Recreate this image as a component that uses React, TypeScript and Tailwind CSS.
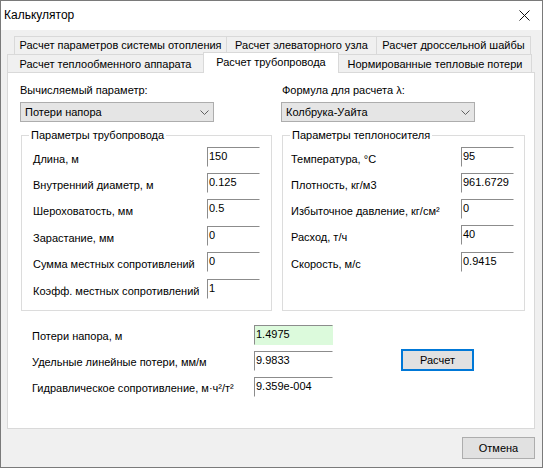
import React from "react";

const font = "font-['Liberation_Sans','Noto_Sans',sans-serif]";

function Field({ value, green }: { value: string; green?: boolean }) {
  return (
    <div
      className={
        green
          ? "h-[20px] w-[79px] shrink-0 border border-t-[#8c8c8c] border-l-[#8c8c8c] border-r-transparent border-b-transparent bg-[#dcfadc] pl-[1px] pt-[1px] leading-[14px] whitespace-nowrap"
          : "h-[20px] w-[79px] shrink-0 border border-t-[#8c8c8c] border-l-[#8c8c8c] border-r-transparent border-b-transparent bg-white pl-[1px] pt-[1px] leading-[14px] whitespace-nowrap"
      }
    >
      {value}
    </div>
  );
}

function SmallField({ value }: { value: string }) {
  return (
    <div className="h-[20px] w-[53px] shrink-0 border border-t-[#8c8c8c] border-l-[#8c8c8c] border-r-transparent border-b-transparent bg-white pl-[1px] pt-[1px] leading-[14px] whitespace-nowrap overflow-hidden">
      {value}
    </div>
  );
}

function Combo({ text }: { text: string }) {
  return (
    <div className="h-[20px] w-[194px] border border-[#adadad] bg-[#e5e5e5] flex items-center justify-between pl-[4px] pr-[3px]">
      <span className="leading-[14px]">{text}</span>
      <svg width="9" height="5" viewBox="0 0 9 5" className="mr-[1px]">
        <polyline points="0.5,0.5 4.5,4.5 8.5,0.5" fill="none" stroke="#606060" strokeWidth="1" />
      </svg>
    </div>
  );
}

function Row({ label, value, mt, labelW }: { label: string; value: string; mt: string; labelW: string }) {
  return (
    <div className={"flex items-start h-[20px] " + mt}>
      <div className={"shrink-0 leading-[15px] mt-[5px] whitespace-nowrap " + labelW}>{label}</div>
      <SmallField value={value} />
    </div>
  );
}

export default function App() {
  return (
    <div className={"w-[543px] h-[468px] flex flex-col border border-[#7a7a7a] bg-[#f0f0f0] text-[11px] text-black " + font}>
      {/* Title bar */}
      <div className="h-[29px] shrink-0 bg-white flex items-center justify-between pl-[3px] pr-[12px] text-[12px]">
        <span className="leading-[15px]">Калькулятор</span>
        <svg width="11" height="11" viewBox="0 0 11 11">
          <line x1="0.5" y1="0.5" x2="10.5" y2="10.5" stroke="#111" strokeWidth="1" />
          <line x1="10.5" y1="0.5" x2="0.5" y2="10.5" stroke="#111" strokeWidth="1" />
        </svg>
      </div>

      <div className="flex flex-col pl-[6px] pr-[7px]">
        {/* Tab row 1 */}
        <div className="flex mt-[6px] ml-[7px] h-[18px]">
          <div className="w-[213px] h-[18px] border border-b-0 border-[#d9d9d9] flex items-center justify-center leading-[15px] whitespace-nowrap">
            Расчет параметров системы отопления
          </div>
          <div className="w-[151px] -ml-px h-[18px] border border-b-0 border-[#d9d9d9] flex items-center justify-center leading-[15px] whitespace-nowrap">
            Расчет элеваторного узла
          </div>
          <div className="w-[155px] -ml-px h-[18px] border border-b-0 border-[#d9d9d9] flex items-center justify-center leading-[15px] whitespace-nowrap">
            Расчет дроссельной шайбы
          </div>
        </div>
        {/* Tab row 2 */}
        <div className="flex items-end h-[19px]">
          <div className="w-[197px] h-[19px] border border-b-0 border-[#d9d9d9] flex items-center justify-center pt-[1px] leading-[15px] whitespace-nowrap">
            Расчет теплообменного аппарата
          </div>
          <div className="relative z-10 w-[136px] -ml-px h-[21px] border border-b-0 border-[#d9d9d9] bg-white flex items-start justify-center pt-[2px] leading-[15px] whitespace-nowrap">
            Расчет трубопровода
          </div>
          <div className="w-[194px] -ml-px h-[19px] border border-b-0 border-[#d9d9d9] flex items-center justify-center pt-[1px] leading-[15px] whitespace-nowrap">
            Нормированные тепловые потери
          </div>
        </div>

        {/* Panel */}
        <div className="-mt-px h-[357px] border border-[#d9d9d9] bg-white flex flex-col pl-[12px] pt-[10px]">
          <div className="flex">
            {/* Left column */}
            <div className="w-[249px] shrink-0 flex flex-col">
              <div className="leading-[15px] h-[15px]">Вычисляемый параметр:</div>
              <div className="mt-[4px]">
                <Combo text="Потери напора" />
              </div>
              <fieldset className="mt-[6px] h-[183px] ml-[1px] border border-[#dcdcdc] px-[11px]">
                <legend className="ml-[-4px] px-[2px] leading-[15px]">Параметры трубопровода</legend>
                <div className="flex flex-col">
                  <Row label="Длина, м" value="150" mt="mt-[4px]" labelW="w-[174px]" />
                  <Row label="Внутренний диаметр, м" value="0.125" mt="mt-[6px]" labelW="w-[174px]" />
                  <Row label="Шероховатость, мм" value="0.5" mt="mt-[6px]" labelW="w-[174px]" />
                  <Row label="Зарастание, мм" value="0" mt="mt-[7px]" labelW="w-[174px]" />
                  <Row label="Сумма местных сопротивлений" value="0" mt="mt-[6px]" labelW="w-[174px]" />
                  <Row label="Коэфф. местных сопротивлений" value="1" mt="mt-[7px]" labelW="w-[174px]" />
                </div>
              </fieldset>
            </div>
            {/* Right column */}
            <div className="ml-[12px] w-[244px] shrink-0 flex flex-col">
              <div className="leading-[15px] h-[15px] ml-[1px]">Формула для расчета λ:</div>
              <div className="mt-[4px]">
                <Combo text="Колбрука-Уайта" />
              </div>
              <fieldset className="mt-[6px] h-[183px] ml-[1px] border border-[#dcdcdc] px-[8px]">
                <legend className="ml-[-1px] px-[2px] leading-[15px]">Параметры теплоносителя</legend>
                <div className="flex flex-col">
                  <Row label="Температура, °C" value="95" mt="mt-[4px]" labelW="w-[170px]" />
                  <Row label="Плотность, кг/м3" value="961.6729" mt="mt-[6px]" labelW="w-[170px]" />
                  <Row label="Избыточное давление,  кг/см²" value="0" mt="mt-[6px]" labelW="w-[170px]" />
                  <Row label="Расход, т/ч" value="40" mt="mt-[6px]" labelW="w-[170px]" />
                  <Row label="Скорость, м/с" value="0.9415" mt="mt-[7px]" labelW="w-[170px]" />
                </div>
              </fieldset>
            </div>
          </div>

          {/* Results */}
          <div className="flex mt-[14px] ml-[12px]">
            <div className="flex flex-col w-[301px] shrink-0">
              <div className="flex items-start h-[20px]">
                <div className="w-[222px] shrink-0 leading-[15px] mt-[4px]">Потери напора, м</div>
                <Field value="1.4975" green />
              </div>
              <div className="flex items-start h-[20px] mt-[6px]">
                <div className="w-[222px] shrink-0 leading-[15px] mt-[4px]">Удельные линейные потери, мм/м</div>
                <Field value="9.9833" />
              </div>
              <div className="flex items-start h-[20px] mt-[6px]">
                <div className="w-[222px] shrink-0 leading-[15px] mt-[4px] whitespace-nowrap">Гидравлическое сопротивление, м·ч²/т²</div>
                <Field value="9.359e-004" />
              </div>
            </div>
            <div className="ml-[68px] mt-[24px]">
              <div className="w-[73px] h-[22px] border-2 border-[#0078d7] bg-[#e1e1e1] flex items-center justify-center leading-[15px]">
                Расчет
              </div>
            </div>
          </div>
        </div>

        {/* Footer */}
        <div className="flex justify-end mt-[8px]">
          <div className="w-[73px] h-[22px] border border-[#adadad] bg-[#e1e1e1] flex items-center justify-center leading-[15px]">
            Отмена
          </div>
        </div>
      </div>
    </div>
  );
}
